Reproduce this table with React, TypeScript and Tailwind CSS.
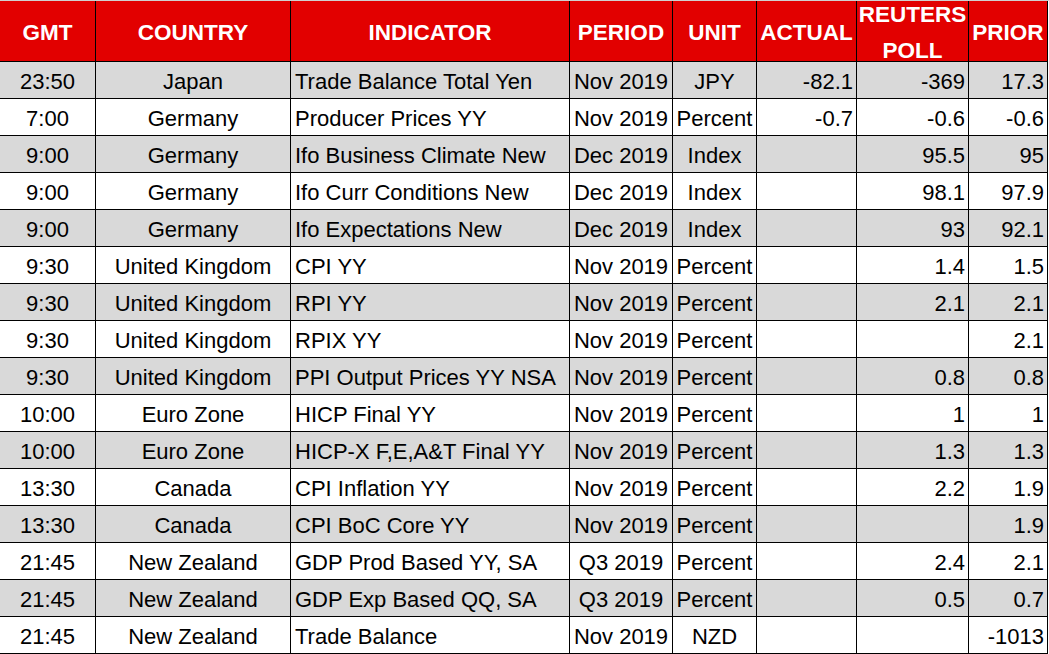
import React from "react";

type Row = {
  gmt: string;
  country: string;
  indicator: string;
  period: string;
  unit: string;
  actual: string;
  poll: string;
  prior: string;
};

const rows: Row[] = [
  { gmt: "23:50", country: "Japan", indicator: "Trade Balance Total Yen", period: "Nov 2019", unit: "JPY", actual: "-82.1", poll: "-369", prior: "17.3" },
  { gmt: "7:00", country: "Germany", indicator: "Producer Prices YY", period: "Nov 2019", unit: "Percent", actual: "-0.7", poll: "-0.6", prior: "-0.6" },
  { gmt: "9:00", country: "Germany", indicator: "Ifo Business Climate New", period: "Dec 2019", unit: "Index", actual: "", poll: "95.5", prior: "95" },
  { gmt: "9:00", country: "Germany", indicator: "Ifo Curr Conditions New", period: "Dec 2019", unit: "Index", actual: "", poll: "98.1", prior: "97.9" },
  { gmt: "9:00", country: "Germany", indicator: "Ifo Expectations New", period: "Dec 2019", unit: "Index", actual: "", poll: "93", prior: "92.1" },
  { gmt: "9:30", country: "United Kingdom", indicator: "CPI YY", period: "Nov 2019", unit: "Percent", actual: "", poll: "1.4", prior: "1.5" },
  { gmt: "9:30", country: "United Kingdom", indicator: "RPI YY", period: "Nov 2019", unit: "Percent", actual: "", poll: "2.1", prior: "2.1" },
  { gmt: "9:30", country: "United Kingdom", indicator: "RPIX YY", period: "Nov 2019", unit: "Percent", actual: "", poll: "", prior: "2.1" },
  { gmt: "9:30", country: "United Kingdom", indicator: "PPI Output Prices YY NSA", period: "Nov 2019", unit: "Percent", actual: "", poll: "0.8", prior: "0.8" },
  { gmt: "10:00", country: "Euro Zone", indicator: "HICP Final YY", period: "Nov 2019", unit: "Percent", actual: "", poll: "1", prior: "1" },
  { gmt: "10:00", country: "Euro Zone", indicator: "HICP-X F,E,A&T Final YY", period: "Nov 2019", unit: "Percent", actual: "", poll: "1.3", prior: "1.3" },
  { gmt: "13:30", country: "Canada", indicator: "CPI Inflation YY", period: "Nov 2019", unit: "Percent", actual: "", poll: "2.2", prior: "1.9" },
  { gmt: "13:30", country: "Canada", indicator: "CPI BoC Core YY", period: "Nov 2019", unit: "Percent", actual: "", poll: "", prior: "1.9" },
  { gmt: "21:45", country: "New Zealand", indicator: "GDP Prod Based YY, SA", period: "Q3 2019", unit: "Percent", actual: "", poll: "2.4", prior: "2.1" },
  { gmt: "21:45", country: "New Zealand", indicator: "GDP Exp Based QQ, SA", period: "Q3 2019", unit: "Percent", actual: "", poll: "0.5", prior: "0.7" },
  { gmt: "21:45", country: "New Zealand", indicator: "Trade Balance", period: "Nov 2019", unit: "NZD", actual: "", poll: "", prior: "-1013" },
];

const head = "flex items-center justify-center whitespace-nowrap bg-[#e20000] pt-[4px] text-[22.5px] font-bold text-white";

export default function App() {
  return (
    <div className="min-h-screen bg-white font-['Liberation_Sans',Arial,sans-serif]">
      <div className="w-[1049px] border-t border-[#d0d0d0] pr-[1px]">
        <div className="grid grid-cols-[95px_194px_278px_102px_83px_99px_111px_78px] grid-rows-[60px_repeat(16,36px)] gap-px border-r border-b border-black bg-black">
          <div className={head}>GMT</div>
          <div className={head}>COUNTRY</div>
          <div className={head}>INDICATOR</div>
          <div className={head}>PERIOD</div>
          <div className={head}>UNIT</div>
          <div className={head}>ACTUAL</div>
          <div className={head}>
            <div className="flex flex-col items-center leading-[36px]">
              <span>REUTERS</span>
              <span>POLL</span>
            </div>
          </div>
          <div className={head}>PRIOR</div>

          {rows.map((r, i) => {
            const bg = i % 2 === 0 ? "bg-[#d9d9d9]" : "bg-white";
            const cell = `flex items-center whitespace-nowrap pt-[3px] text-[22px] text-black ${bg}`;
            return (
              <React.Fragment key={i}>
                <div className={`${cell} justify-center`}>{r.gmt}</div>
                <div className={`${cell} justify-center`}>{r.country}</div>
                <div className={`${cell} pl-[4px]`}>{r.indicator}</div>
                <div className={`${cell} justify-center`}>{r.period}</div>
                <div className={`${cell} justify-center`}>{r.unit}</div>
                <div className={`${cell} justify-end pr-[3px]`}>{r.actual}</div>
                <div className={`${cell} justify-end pr-[3px]`}>{r.poll}</div>
                <div className={`${cell} justify-end pr-[3px]`}>{r.prior}</div>
              </React.Fragment>
            );
          })}
        </div>
      </div>
    </div>
  );
}
